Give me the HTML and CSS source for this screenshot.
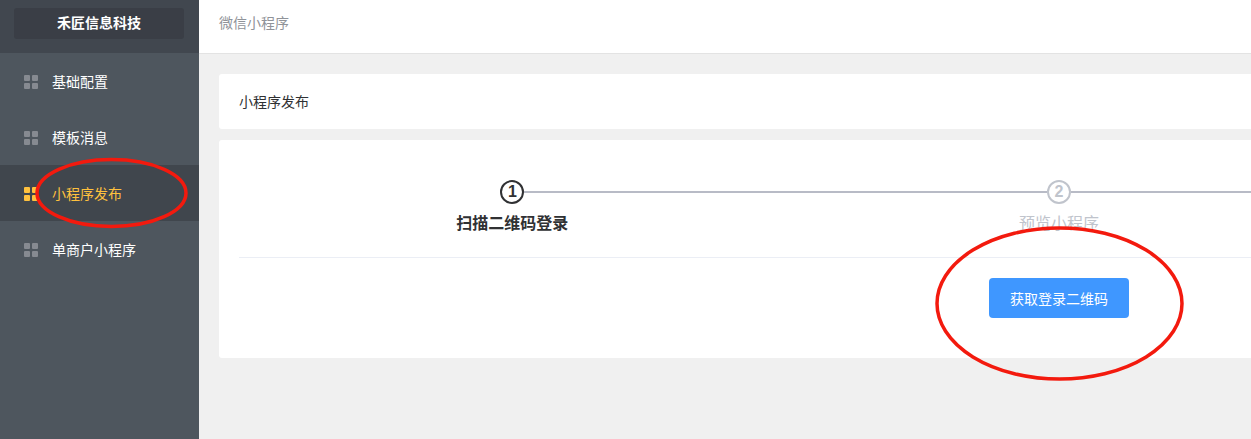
FILE: index.html
```html
<!DOCTYPE html>
<html>
<head>
  <title>小程序发布</title>
  <meta charset="UTF-8" />
  <link rel="stylesheet" href="styles.css">
</head>
<body>
  <aside class="sidebar">
    <div class="logo-wrap">
      <div class="logo">禾匠信息科技</div>
    </div>
    <nav class="menu">
      <a class="menu-item"><span class="grid-icon"><i></i><i></i><i></i><i></i></span>基础配置</a>
      <a class="menu-item"><span class="grid-icon"><i></i><i></i><i></i><i></i></span>模板消息</a>
      <a class="menu-item active"><span class="grid-icon"><i></i><i></i><i></i><i></i></span>小程序发布</a>
      <a class="menu-item"><span class="grid-icon"><i></i><i></i><i></i><i></i></span>单商户小程序</a>
    </nav>
  </aside>

  <div class="main">
    <header class="topbar">微信小程序</header>
    <div class="content">
      <div class="card card-title">小程序发布</div>
      <div class="card card-body">
        <div class="steps">
          <div class="step current">
            <div class="step-head">
              <span class="line none"></span>
              <span class="circle">1</span>
              <span class="line"></span>
            </div>
            <div class="step-title">扫描二维码登录</div>
          </div>
          <div class="step">
            <div class="step-head">
              <span class="line"></span>
              <span class="circle">2</span>
              <span class="line"></span>
            </div>
            <div class="step-title">预览小程序</div>
          </div>
        </div>
        <div class="actions">
          <button class="btn">获取登录二维码</button>
        </div>
      </div>
    </div>
  </div>

  <!-- red marks drawn over the screenshot -->
  <svg class="marks" width="1251" height="439" viewBox="0 0 1251 439">
    <ellipse cx="111.5" cy="193" rx="74.5" ry="33.5" />
    <ellipse cx="1059.5" cy="303.5" rx="122.5" ry="75.5" />
  </svg>
</body>
</html>
```

FILE: styles.css
```css
html, body {
  height: 100%;
}
body {
  margin: 0;
  display: flex;
  width: 1251px;
  overflow: hidden;
  position: relative;
  background-color: #f0f0f0;
  font-family: "Microsoft YaHei", "Liberation Sans", "Noto Sans CJK SC", sans-serif;
  font-size: 14px;
  color: #303133;
}
.sidebar {
  flex: 0 0 199px;
  background-color: #4e565e;
}
.logo-wrap {
  height: 53px;
  padding: 8px 15px 14px 14px;
  box-sizing: border-box;
  background-color: #41474f;
}
.logo {
  height: 31px;
  line-height: 31px;
  border-radius: 3px;
  background-color: #3a3e46;
  color: #fff;
  font-weight: bold;
  text-align: center;
}
.menu-item {
  display: flex;
  align-items: center;
  height: 56px;
  padding-left: 24px;
  color: #fff;
}
.menu-item.active {
  background-color: #40464d;
  color: #ffc13e;
}
.grid-icon {
  display: grid;
  grid-template-columns: 6px 6px;
  grid-template-rows: 6px 6px;
  gap: 2px;
  margin: 2px 14px 0 0;
}
.grid-icon i {
  background-color: #868a91;
  border-radius: 1px;
}
.active .grid-icon i {
  background-color: #ffc13e;
}
.main {
  flex: 0 0 1720px;
}
.topbar {
  height: 54px;
  line-height: 46px;
  padding-left: 20px;
  box-sizing: border-box;
  background-color: #fff;
  border-bottom: 1px solid #e3e3e3;
  color: #909399;
}
.content {
  padding: 20px;
}
.card {
  background-color: #fff;
  border-radius: 3px;
}
.card-title {
  height: 55px;
  line-height: 56px;
  padding-left: 20px;
  margin-bottom: 11px;
}
.card-body {
  height: 218px;
  padding: 40px 20px 0;
  box-sizing: border-box;
}
.steps {
  display: grid;
  grid-template-columns: repeat(3, 1fr);
  height: 78px;
  box-sizing: border-box;
  border-bottom: 1px solid #ebeef5;
}
.step {
  text-align: center;
}
.step-head {
  display: flex;
  align-items: center;
}
.line {
  flex: 1;
  height: 2px;
  background-color: #b8bbc6;
}
.line.none {
  background-color: transparent;
}
.circle {
  width: 24px;
  height: 24px;
  box-sizing: border-box;
  border: 2px solid #c0c4cc;
  border-radius: 50%;
  line-height: 20px;
  font-size: 16px;
  font-weight: bold;
  color: #c0c4cc;
}
.current .circle {
  border-color: #303133;
  color: #303133;
}
.step-title {
  margin-top: 8px;
  line-height: 24px;
  font-size: 16px;
  color: #c0c4cc;
}
.current .step-title {
  font-weight: bold;
  color: #303133;
}
.actions {
  padding-top: 20px;
  text-align: center;
}
.btn {
  width: 140px;
  height: 40px;
  border: 0;
  border-radius: 4px;
  background-color: #3f97ff;
  color: #fff;
  font-family: inherit;
  font-size: 14px;
}
.marks {
  position: absolute;
  left: 0;
  top: 0;
  fill: none;
  stroke: #f31a0e;
  stroke-width: 3.5;
}
```
